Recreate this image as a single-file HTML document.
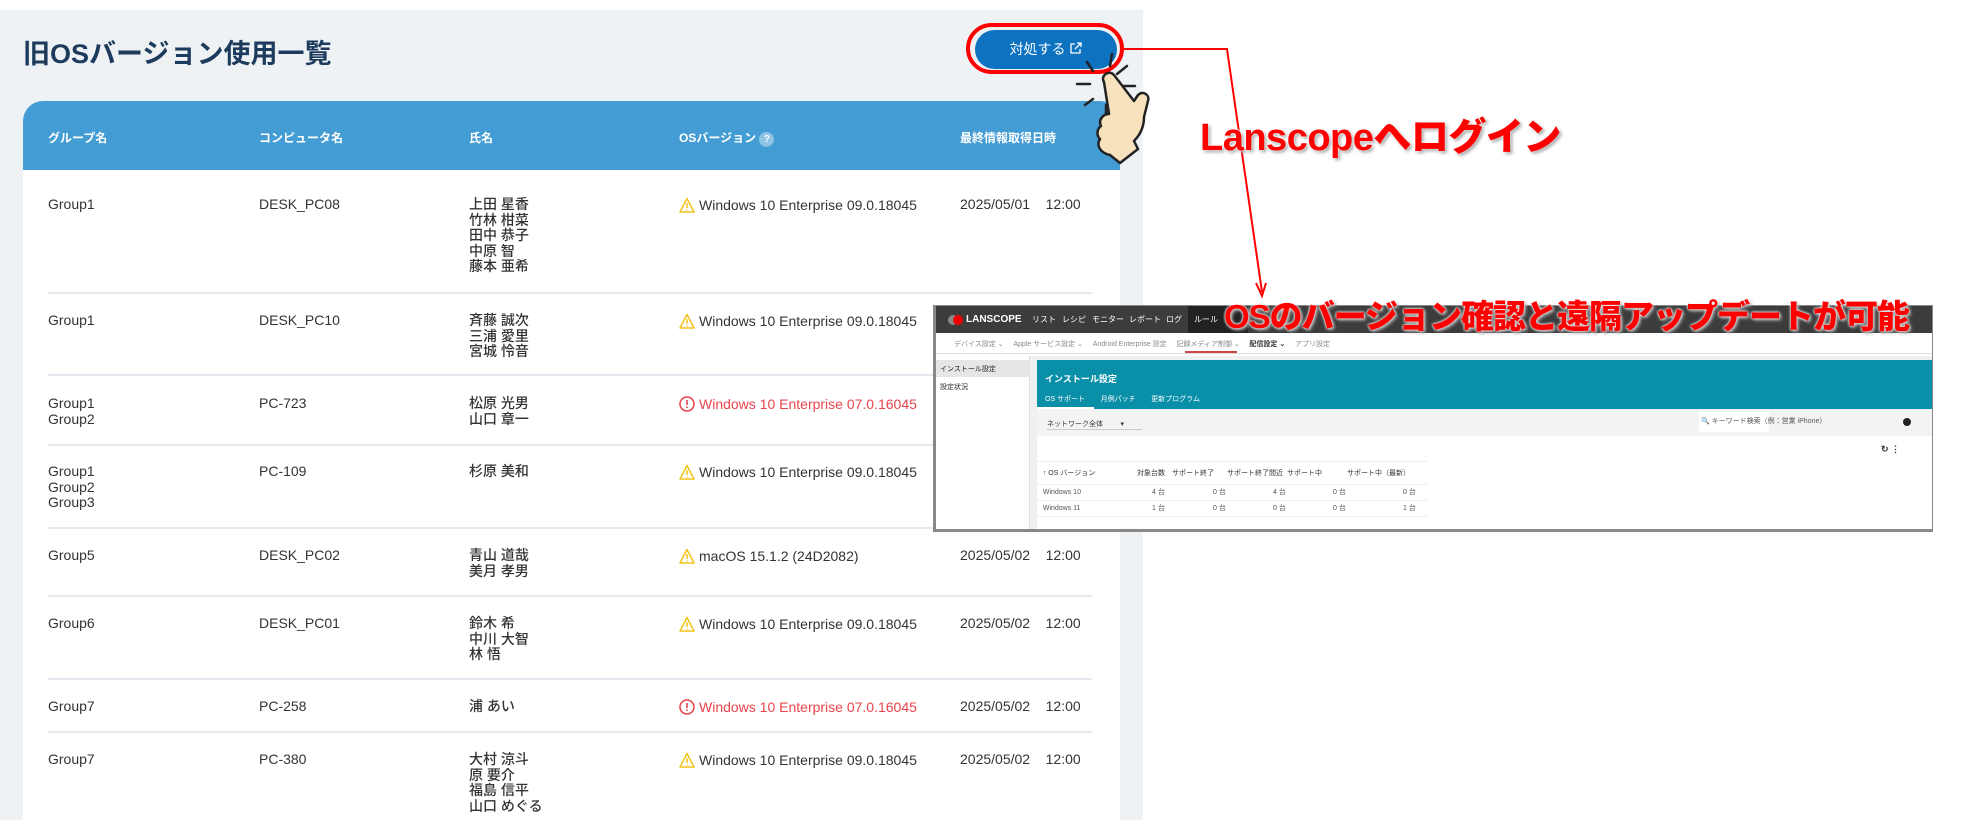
<!DOCTYPE html>
<html><head><meta charset="utf-8"><style>
*{margin:0;padding:0;box-sizing:border-box}
body{width:1973px;height:820px;background:#fff;position:relative;overflow:hidden;font-family:"Liberation Sans","Noto Sans CJK JP",sans-serif;color:#333}
.a{position:absolute;white-space:nowrap}
.t{font-size:14px;line-height:15.5px;font-weight:500;color:#333}
.h{font-size:12px;font-weight:700;color:#fff;top:129px}
.sep{position:absolute;left:48px;width:1044px;height:2px;background:#e3e9ee}
.red{color:#e9434b}
.ic{display:inline-block;vertical-align:-3px;margin-right:4px}
.ss{font-size:7px;color:#555}
.big{font-weight:900;color:#ff0000;-webkit-text-stroke:0;text-shadow:0 0 3px #fff,2px 2px 3px #999,0 0 2px #fff}
</style></head><body>
<div class="a" style="left:0;top:10px;width:1143px;height:810px;background:#eef2f5"></div>
<div class="a" style="left:23px;top:32px;font-size:27px;font-weight:700;color:#1d3b5c">旧OSバージョン使用一覧</div>
<div class="a" style="left:975px;top:30px;width:142px;height:39px;border-radius:20px;background:#0d72c0;color:#fff;font-size:14px;line-height:39px;text-align:center">対処する <svg width="13" height="13" viewBox="0 0 13 13" style="vertical-align:-1px"><path d="M6 2H2v9h9V7M8 1h4v4M12 1L6 7" fill="none" stroke="#fff" stroke-width="1.3"/></svg></div>
<div class="a" style="left:966px;top:23px;width:158px;height:51px;border:4px solid #f00;border-radius:26px"></div>
<!-- table -->
<div class="a" style="left:23px;top:101px;width:1097px;height:719px;background:#fff;border-radius:20px 20px 0 0"></div>
<div class="a" style="left:23px;top:101px;width:1097px;height:69px;background:#439cd3;border-radius:20px 20px 0 0"></div>
<div class="a h" style="left:48px">グループ名</div>
<div class="a h" style="left:259px">コンピュータ名</div>
<div class="a h" style="left:469px">氏名</div>
<div class="a h" style="left:679px">OSバージョン <span style="display:inline-block;width:15px;height:15px;border-radius:8px;background:#8fc3e6;color:#fff;font-size:10px;text-align:center;line-height:15px">?</span></div>
<div class="a h" style="left:960px">最終情報取得日時</div>
<svg width="0" height="0" style="position:absolute"><defs>
<g id="w"><path d="M8 1.5L15 15H1Z" fill="#fff" stroke="#f2c21b" stroke-width="1.5" stroke-linejoin="round"/><path d="M8 6v5M8 12.5v1" stroke="#f2c21b" stroke-width="1.5"/></g>
<g id="e"><circle cx="8" cy="8" r="7" fill="none" stroke="#e9434b" stroke-width="1.5"/><path d="M8 4v5M8 10.5v1.5" stroke="#e9434b" stroke-width="1.6"/></g></defs></svg>
<!-- rows -->
<div class="a t" style="left:48px;top:197px">Group1</div><div class="a t" style="left:259px;top:197px">DESK_PC08</div>
<div class="a t" style="left:469px;top:197px">上田 星香<br>竹林 柑菜<br>田中 恭子<br>中原 智<br>藤本 亜希</div>
<div class="a t" style="left:679px;top:197px"><svg class="ic" width="16" height="16"><use href="#w"/></svg>Windows 10 Enterprise 09.0.18045</div>
<div class="a t" style="left:960px;top:197px">2025/05/01&nbsp;&nbsp;&nbsp; 12:00</div>
<div class="sep" style="top:292px"></div>
<div class="a t" style="left:48px;top:313px">Group1</div><div class="a t" style="left:259px;top:313px">DESK_PC10</div>
<div class="a t" style="left:469px;top:313px">斉藤 誠次<br>三浦 愛里<br>宮城 怜音</div>
<div class="a t" style="left:679px;top:313px"><svg class="ic" width="16" height="16"><use href="#w"/></svg>Windows 10 Enterprise 09.0.18045</div>
<div class="sep" style="top:374px"></div>
<div class="a t" style="left:48px;top:396px">Group1<br>Group2</div><div class="a t" style="left:259px;top:396px">PC-723</div>
<div class="a t" style="left:469px;top:396px">松原 光男<br>山口 章一</div>
<div class="a t red" style="left:679px;top:396px"><svg class="ic" width="16" height="16"><use href="#e"/></svg>Windows 10 Enterprise 07.0.16045</div>
<div class="sep" style="top:444px"></div>
<div class="a t" style="left:48px;top:464px">Group1<br>Group2<br>Group3</div><div class="a t" style="left:259px;top:464px">PC-109</div>
<div class="a t" style="left:469px;top:464px">杉原 美和</div>
<div class="a t" style="left:679px;top:464px"><svg class="ic" width="16" height="16"><use href="#w"/></svg>Windows 10 Enterprise 09.0.18045</div>
<div class="sep" style="top:527px"></div>
<div class="a t" style="left:48px;top:548px">Group5</div><div class="a t" style="left:259px;top:548px">DESK_PC02</div>
<div class="a t" style="left:469px;top:548px">青山 道哉<br>美月 孝男</div>
<div class="a t" style="left:679px;top:548px"><svg class="ic" width="16" height="16"><use href="#w"/></svg>macOS 15.1.2 (24D2082)</div>
<div class="a t" style="left:960px;top:548px">2025/05/02&nbsp;&nbsp;&nbsp; 12:00</div>
<div class="sep" style="top:595px"></div>
<div class="a t" style="left:48px;top:616px">Group6</div><div class="a t" style="left:259px;top:616px">DESK_PC01</div>
<div class="a t" style="left:469px;top:616px">鈴木 希<br>中川 大智<br>林 悟</div>
<div class="a t" style="left:679px;top:616px"><svg class="ic" width="16" height="16"><use href="#w"/></svg>Windows 10 Enterprise 09.0.18045</div>
<div class="a t" style="left:960px;top:616px">2025/05/02&nbsp;&nbsp;&nbsp; 12:00</div>
<div class="sep" style="top:678px"></div>
<div class="a t" style="left:48px;top:699px">Group7</div><div class="a t" style="left:259px;top:699px">PC-258</div>
<div class="a t" style="left:469px;top:699px">浦 あい</div>
<div class="a t red" style="left:679px;top:699px"><svg class="ic" width="16" height="16"><use href="#e"/></svg>Windows 10 Enterprise 07.0.16045</div>
<div class="a t" style="left:960px;top:699px">2025/05/02&nbsp;&nbsp;&nbsp; 12:00</div>
<div class="sep" style="top:731px"></div>
<div class="a t" style="left:48px;top:752px">Group7</div><div class="a t" style="left:259px;top:752px">PC-380</div>
<div class="a t" style="left:469px;top:752px">大村 涼斗<br>原 要介<br>福島 信平<br>山口 めぐる</div>
<div class="a t" style="left:679px;top:752px"><svg class="ic" width="16" height="16"><use href="#w"/></svg>Windows 10 Enterprise 09.0.18045</div>
<div class="a t" style="left:960px;top:752px">2025/05/02&nbsp;&nbsp;&nbsp; 12:00</div>
<!-- annotation lines -->
<svg class="a" style="left:0;top:0" width="1973" height="820">
<path d="M1124 49H1227L1262 292" fill="none" stroke="#f00" stroke-width="2"/>
<path d="M1256 283L1262 296L1266 283" fill="none" stroke="#f00" stroke-width="2"/>
<!-- hand -->
<g stroke="#222" stroke-width="2.5" stroke-linecap="round">
<path d="M1087 62l6 9M1112 54l-2 12M1127 66l-10 8M1077 84h13M1135 86h-15M1085 105l8-6M1106 105l0 10"/>
</g>
<path d="M1104 82c-4-6 5-13 10-7l20 26 4-6c5-5 12 0 10 6l-4 16c0 10-4 18-10 24l4 8-18 14-10-8c-10-2-14-10-10-16-4-4-3-10 1-13-3-6 2-12 8-12z" fill="#f7e2bd" stroke="#222" stroke-width="2.5" stroke-linejoin="round"/>
</svg>
<div class="a big" style="left:1200px;top:106px;font-size:38px;letter-spacing:-0.5px">Lanscopeへログイン</div>
<!-- screenshot -->
<div class="a" style="left:933px;top:305px;width:1000px;height:227px;background:#fff;border:1px solid #888;border-bottom:3px solid #888;border-left:3px solid #888;overflow:hidden">
 <div class="a" style="left:0;top:0;width:1000px;height:27px;background:#3c3c3c"></div>
 <div class="a" style="left:0;top:0;width:1000px;height:27px;color:#fff;font-size:8px;line-height:27px">
  <span class="a" style="left:12px;top:9px;width:10px;height:10px;border-radius:5px;background:#888"></span><span class="a" style="left:17px;top:9px;width:10px;height:10px;border-radius:5px;background:#e00"></span>
  <span class="a" style="left:30px;font-weight:700;font-size:10px">LANSCOPE</span>
  <span class="a" style="left:96px">リスト</span><span class="a" style="left:126px">レシピ</span><span class="a" style="left:156px">モニター</span><span class="a" style="left:193px">レポート</span><span class="a" style="left:230px">ログ</span><span class="a" style="left:252px;background:#222;width:60px;padding-left:6px">ルール</span></div>
 <div class="a ss" style="left:18px;top:33px;color:#888">デバイス設定 ⌄&nbsp;&nbsp;&nbsp;&nbsp; Apple サービス設定 ⌄&nbsp;&nbsp;&nbsp;&nbsp; Android Enterprise 設定&nbsp;&nbsp;&nbsp;&nbsp; 記録メディア制御 ⌄&nbsp;&nbsp;&nbsp;&nbsp; <b style="color:#333">配信設定 ⌄</b>&nbsp;&nbsp;&nbsp;&nbsp; アプリ設定</div>
 <div class="a" style="left:249px;top:45px;width:52px;height:2px;background:#c44"></div>
 <div class="a" style="left:0;top:47px;width:1000px;height:1px;background:#ddd"></div>
 <div class="a" style="left:0;top:50px;width:1000px;height:180px;background:#f0f0f0"></div>
 <div class="a" style="left:0;top:50px;width:94px;height:180px;background:#fff;border-right:1px solid #ddd"></div>
 <div class="a" style="left:0;top:54px;width:94px;height:17px;background:#e6e6e6"></div>
 <div class="a ss" style="left:4px;top:58px;color:#222">インストール設定</div>
 <div class="a ss" style="left:4px;top:76px;color:#222">設定状況</div>
 <div class="a" style="left:101px;top:54px;width:896px;height:49px;background:#0a8fa8"></div>
 <div class="a" style="left:109px;top:66px;font-size:9px;color:#fff;font-weight:700">インストール設定</div>
 <div class="a ss" style="left:109px;top:88px;color:#fff">OS サポート&nbsp;&nbsp;&nbsp;&nbsp;&nbsp;&nbsp;&nbsp; 月例パッチ&nbsp;&nbsp;&nbsp;&nbsp;&nbsp;&nbsp;&nbsp; 更新プログラム</div>
 <div class="a" style="left:101px;top:101px;width:57px;height:2px;background:#fff"></div>
 <div class="a" style="left:101px;top:103px;width:896px;height:125px;background:#fff"></div>
 <div class="a" style="left:101px;top:103px;width:896px;height:27px;background:#f3f3f3"></div>
 <div class="a ss" style="left:111px;top:113px;color:#333;border-bottom:1px solid #ccc;width:95px">ネットワーク全体 &nbsp;&nbsp;&nbsp;&nbsp;&nbsp;&nbsp;&nbsp; ▾</div>
 <div class="a ss" style="left:763px;top:106px;width:70px;height:20px;background:#fff;line-height:20px">&nbsp;🔍 キーワード検索（例：営業 iPhone）</div>
 <div class="a" style="left:967px;top:112px;width:8px;height:8px;border-radius:4px;background:#222"></div>
 <div class="a" style="left:945px;top:138px;font-size:9px;font-weight:700">↻ ⋮</div>
 <div class="a ss" style="left:101px;top:155px;width:390px;height:24px;border-top:1px solid #eee;border-bottom:1px solid #eee;line-height:24px;color:#333">&nbsp;&nbsp;&nbsp;↑ OS バージョン<span class="a" style="left:100px">対象台数</span><span class="a" style="left:135px">サポート終了</span><span class="a" style="left:190px">サポート終了間近</span><span class="a" style="left:250px">サポート中</span><span class="a" style="left:310px">サポート中（最新）</span></div>
 <div class="a ss" style="left:101px;top:179px;width:390px;height:16px;border-bottom:1px solid #eee;line-height:16px">&nbsp;&nbsp;&nbsp;Windows 10<span class="a" style="left:115px">4 台</span><span class="a" style="left:176px">0 台</span><span class="a" style="left:236px">4 台</span><span class="a" style="left:296px">0 台</span><span class="a" style="left:366px">0 台</span></div>
 <div class="a ss" style="left:101px;top:195px;width:390px;height:16px;border-bottom:1px solid #eee;line-height:16px">&nbsp;&nbsp;&nbsp;Windows 11<span class="a" style="left:115px">1 台</span><span class="a" style="left:176px">0 台</span><span class="a" style="left:236px">0 台</span><span class="a" style="left:296px">0 台</span><span class="a" style="left:366px">1 台</span></div>
</div>
<div class="a big" style="left:1224px;top:290px;font-size:33px;letter-spacing:-1px">OSのバージョン確認と遠隔アップデートが可能</div>
</body></html>
